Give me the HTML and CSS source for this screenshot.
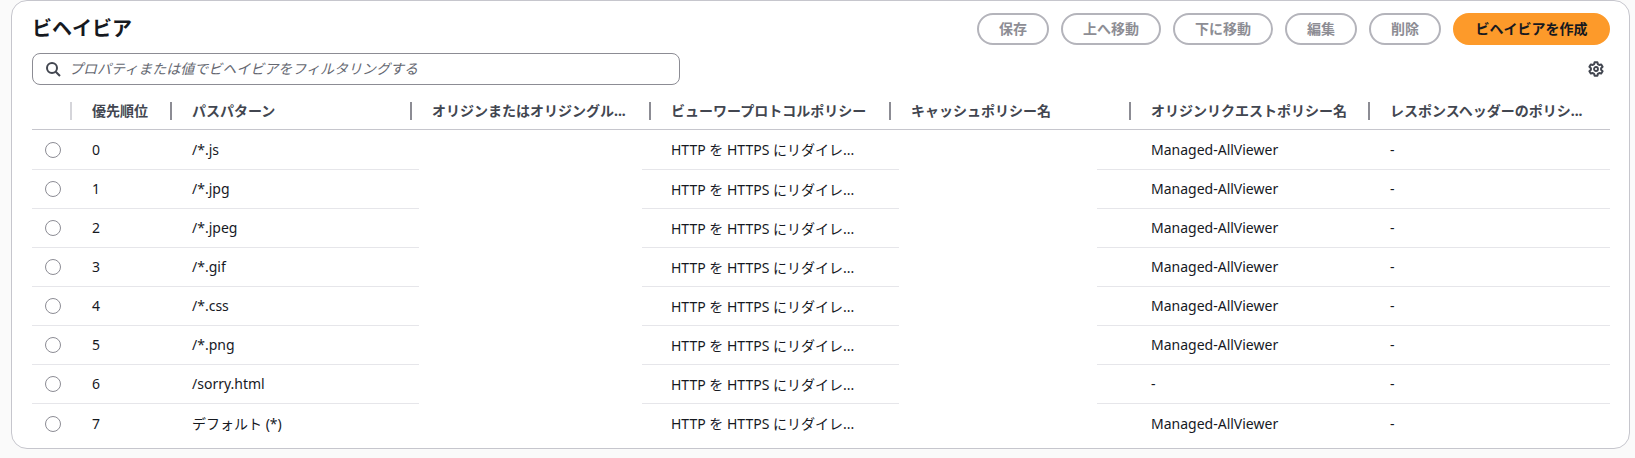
FILE: index.html
```html
<!DOCTYPE html>
<html lang="ja">
<head>
<meta charset="utf-8">
<title>ビヘイビア</title>
<link rel="stylesheet" href="styles.css">
</head>
<body>
<section class="card">
  <header class="top">
    <h2 class="title">ビヘイビア</h2>
    <div class="actions">
      <button class="btn">保存</button>
      <button class="btn">上へ移動</button>
      <button class="btn">下に移動</button>
      <button class="btn">編集</button>
      <button class="btn">削除</button>
      <button class="btn primary">ビヘイビアを作成</button>
    </div>
  </header>
  <div class="tools">
    <label class="search">
      <svg class="search-icon" viewBox="0 0 16 16" width="16" height="16"><circle cx="7" cy="7" r="5" fill="none" stroke="#424650" stroke-width="2"/><path d="M10.7 10.7L15 15" stroke="#424650" stroke-width="2" fill="none"/></svg>
      <span class="placeholder">プロパティまたは値でビヘイビアをフィルタリングする</span>
    </label>
    <svg class="gear" viewBox="0 0 16 16" width="16" height="16"><path d="M6.6 1.2h2.8l.5 2 1.3.8 2-.6 1.4 2.4-1.5 1.4v1.6l1.5 1.4-1.4 2.4-2-.6-1.3.8-.5 2H6.6l-.5-2-1.3-.8-2 .6-1.4-2.4 1.5-1.4V7.2L1.4 5.8l1.4-2.4 2 .6 1.3-.8z" fill="none" stroke="#424650" stroke-width="2" stroke-linejoin="round"/><circle cx="8" cy="8" r="2" fill="none" stroke="#424650" stroke-width="1.8"/></svg>
  </div>
  <table class="grid">
    <colgroup>
      <col class="c0"><col class="c1"><col class="c2"><col class="c3"><col class="c4"><col class="c5"><col class="c6"><col class="c7">
    </colgroup>
    <thead>
      <tr>
        <th></th>
        <th><span class="th light">優先順位</span></th>
        <th><span class="th">パスパターン</span></th>
        <th><span class="th">オリジンまたはオリジングル...</span></th>
        <th><span class="th">ビューワープロトコルポリシー</span></th>
        <th><span class="th">キャッシュポリシー名</span></th>
        <th><span class="th">オリジンリクエストポリシー名</span></th>
        <th><span class="th">レスポンスヘッダーのポリシ...</span></th>
      </tr>
    </thead>
    <tbody>
      <tr><td><i class="radio"></i></td><td>0</td><td>/*.js</td><td class="blank b3"></td><td>HTTP を HTTPS にリダイレ...</td><td class="blank b5"></td><td>Managed-AllViewer</td><td>-</td></tr>
      <tr><td><i class="radio"></i></td><td>1</td><td>/*.jpg</td><td class="blank b3"></td><td>HTTP を HTTPS にリダイレ...</td><td class="blank b5"></td><td>Managed-AllViewer</td><td>-</td></tr>
      <tr><td><i class="radio"></i></td><td>2</td><td>/*.jpeg</td><td class="blank b3"></td><td>HTTP を HTTPS にリダイレ...</td><td class="blank b5"></td><td>Managed-AllViewer</td><td>-</td></tr>
      <tr><td><i class="radio"></i></td><td>3</td><td>/*.gif</td><td class="blank b3"></td><td>HTTP を HTTPS にリダイレ...</td><td class="blank b5"></td><td>Managed-AllViewer</td><td>-</td></tr>
      <tr><td><i class="radio"></i></td><td>4</td><td>/*.css</td><td class="blank b3"></td><td>HTTP を HTTPS にリダイレ...</td><td class="blank b5"></td><td>Managed-AllViewer</td><td>-</td></tr>
      <tr><td><i class="radio"></i></td><td>5</td><td>/*.png</td><td class="blank b3"></td><td>HTTP を HTTPS にリダイレ...</td><td class="blank b5"></td><td>Managed-AllViewer</td><td>-</td></tr>
      <tr><td><i class="radio"></i></td><td>6</td><td>/sorry.html</td><td class="blank b3"></td><td>HTTP を HTTPS にリダイレ...</td><td class="blank b5"></td><td>-</td><td>-</td></tr>
      <tr><td><i class="radio"></i></td><td>7</td><td>デフォルト (*)</td><td class="blank"></td><td>HTTP を HTTPS にリダイレ...</td><td class="blank"></td><td>Managed-AllViewer</td><td>-</td></tr>
    </tbody>
  </table>
</section>
</body>
</html>
```
FILE: styles.css
```css
* { box-sizing: border-box; }
html, body { margin: 0; height: 458px; overflow: hidden; }
body {
  background: #fafafa;
  font-family: "Noto Sans", "Noto Sans CJK JP", sans-serif;
  font-size: 14px;
  color: #16191f;
  padding: 0 5px 9px 11px;
}
.card {
  height: 449px;
  background: #fff;
  border: 1px solid #c6c6cd;
  border-radius: 16px;
  padding: 12px 19px 0 20px;
}
.top { display: flex; justify-content: space-between; align-items: center; height: 32px; }
.title { margin: 0; padding-bottom: 3px; font-size: 20px; font-weight: 700; color: #16191f; }
.actions { display: flex; gap: 12px; }
.btn {
  height: 32px;
  padding: 0 20px 2px;
  border: 2px solid #b4b4bb;
  border-radius: 16px;
  background: #fff;
  color: #8d8d94;
  font: 700 14px "Noto Sans", "Noto Sans CJK JP", sans-serif;
}
.btn.primary { padding: 0 20.5px 2px; background: #fd9a2a; border-color: #fd9a2a; color: #16191f; }
.tools { display: flex; justify-content: space-between; align-items: center; margin-top: 8px; padding-right: 6px; }
.search {
  display: flex; align-items: center; gap: 8px;
  width: 648px; height: 32px;
  padding: 0 12px;
  border: 1px solid #8c8c94;
  border-radius: 8px;
}
.placeholder { padding-bottom: 2px; font-style: italic; color: #656871; font-size: 14px; }
.grid { width: 1578px; border-collapse: separate; border-spacing: 0; table-layout: fixed; margin-top: 12px; }
.c0 { width: 39px; } .c1 { width: 100px; } .c2 { width: 240px; } .c3 { width: 239px; }
.c4 { width: 240px; } .c5 { width: 240px; } .c6 { width: 239px; } .c7 { width: 241px; }
.grid th { height: 33px; padding: 5px 0 0; vertical-align: top; border-bottom: 1px solid #c6c6cd; text-align: left; font-size: 14px; font-weight: 700; color: #424650; }
.th { display: block; margin-left: -1px; border-left: 2px solid #8c8c94; padding-left: 20px; height: 18px; line-height: 18px; white-space: nowrap; overflow: hidden; }
.th.light { border-left-color: #d5d5da; }
.grid td { height: 39px; padding: 0 0 1px 21px; border-bottom: 1px solid #e6e6ea; white-space: nowrap; font-size: 14px; }
.grid tbody tr:first-child td { height: 40px; }
.grid td:first-child { padding: 0 0 0 13px; }
.grid tr:last-child td { border-bottom: none; }
.grid td.blank { border-bottom: none; }
.grid td.b3 { background: linear-gradient(#e6e6ea, #e6e6ea) left bottom / 8px 1px no-repeat, linear-gradient(#e6e6ea, #e6e6ea) right bottom / 8px 1px no-repeat; }
.grid td.b5 { background: linear-gradient(#e6e6ea, #e6e6ea) left bottom / 9px 1px no-repeat, linear-gradient(#e6e6ea, #e6e6ea) right bottom / 33px 1px no-repeat; }
.radio { display: block; width: 16px; height: 16px; border: 1px solid #8c8c94; border-radius: 50%; }
```
